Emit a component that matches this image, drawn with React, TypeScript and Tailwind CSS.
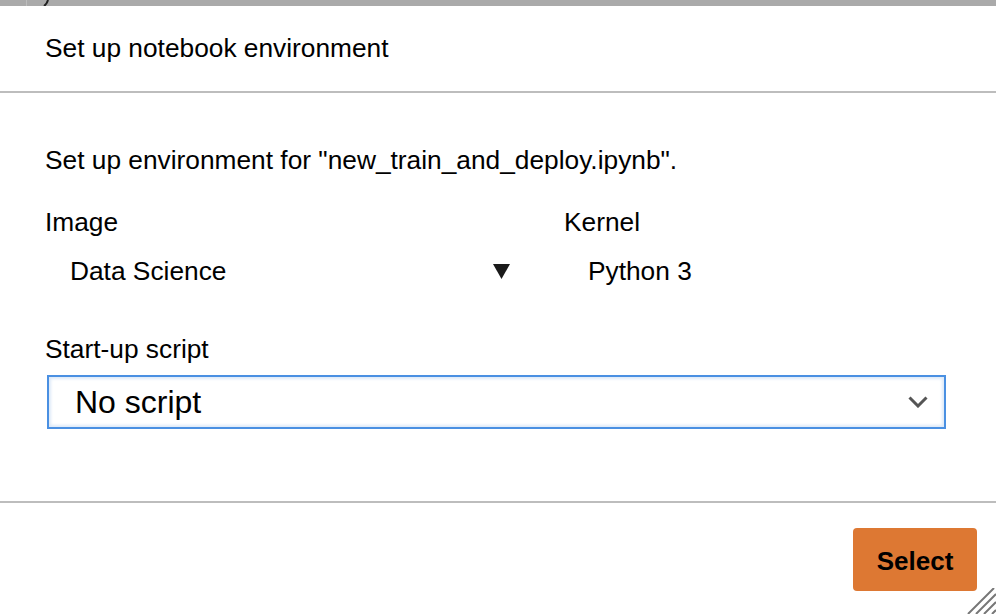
function Chevron() {
  return (
    <svg width="20" height="12" viewBox="0 0 20 12" className="shrink-0">
      <path d="M1.5 1.5 L10 10 L18.5 1.5" fill="none" stroke="#555555" strokeWidth="3" />
    </svg>
  );
}

function Caret() {
  return (
    <svg width="17" height="15" viewBox="0 0 17 15" className="shrink-0">
      <path d="M0 0 H17 L8.5 15 Z" fill="#1a1a1a" />
    </svg>
  );
}

function ResizeHandle() {
  return (
    <svg width="30" height="26" viewBox="0 0 30 26" className="absolute bottom-0 right-0">
      <path d="M2 26 L28 0 M10 26 L30 6 M18 26 L30 14 M26 26 L30 22" stroke="#777777" strokeWidth="2" />
    </svg>
  );
}

export default function App() {
  return (
    <div className="relative flex h-[614px] w-[996px] flex-col overflow-hidden bg-white font-['Liberation_Sans',Arial,sans-serif] text-[26.3px] text-black">
      <div className="relative h-[6px] shrink-0 bg-[#aaaaaa]">
        <div className="absolute left-[26px] top-0 h-[6px] w-px bg-[#bdbdbd]" />
        <svg width="8" height="6" viewBox="0 0 8 6" className="absolute left-[42px] top-0">
          <path d="M6 0 Q5 4 2 6" fill="none" stroke="#222222" strokeWidth="2" />
        </svg>
      </div>

      <div className="flex h-[87px] shrink-0 items-center border-b-2 border-[#bdbdbd] pl-[45px]">
        Set up notebook environment
      </div>

      <div className="flex h-[410px] shrink-0 flex-col border-b-2 border-[#bdbdbd] px-[45px] pt-[52px]">
        <div className="leading-[30px]">Set up environment for "new_train_and_deploy.ipynb".</div>

        <div className="mt-[32px] grid grid-cols-[465px_1fr] gap-x-[54px] leading-[30px]">
          <div>Image</div>
          <div>Kernel</div>
          <div className="mt-[19px] flex items-center justify-between pl-[25px]">
            <span>Data Science</span>
            <Caret />
          </div>
          <div className="mt-[19px] pl-[24px]">Python 3</div>
        </div>

        <div className="mt-[48px] leading-[30px]">Start-up script</div>
        <div className="ml-[2px] mt-[11px] flex h-[54px] w-[899px] items-center justify-between border-2 border-[#4a90e2] bg-white pl-[26px] pr-[16px] text-[32px] shadow-[inset_0_0_3px_2px_#dde9f8]">
          <span>No script</span>
          <Chevron />
        </div>
      </div>

      <div className="flex flex-1 justify-end pr-[19px] pt-[25px]">
        <button className="flex h-[63px] w-[124px] items-center justify-center rounded-[4px] bg-[#dd7833] pt-[3px] text-[26px] font-bold text-black">
          Select
        </button>
      </div>

      <ResizeHandle />
    </div>
  );
}
